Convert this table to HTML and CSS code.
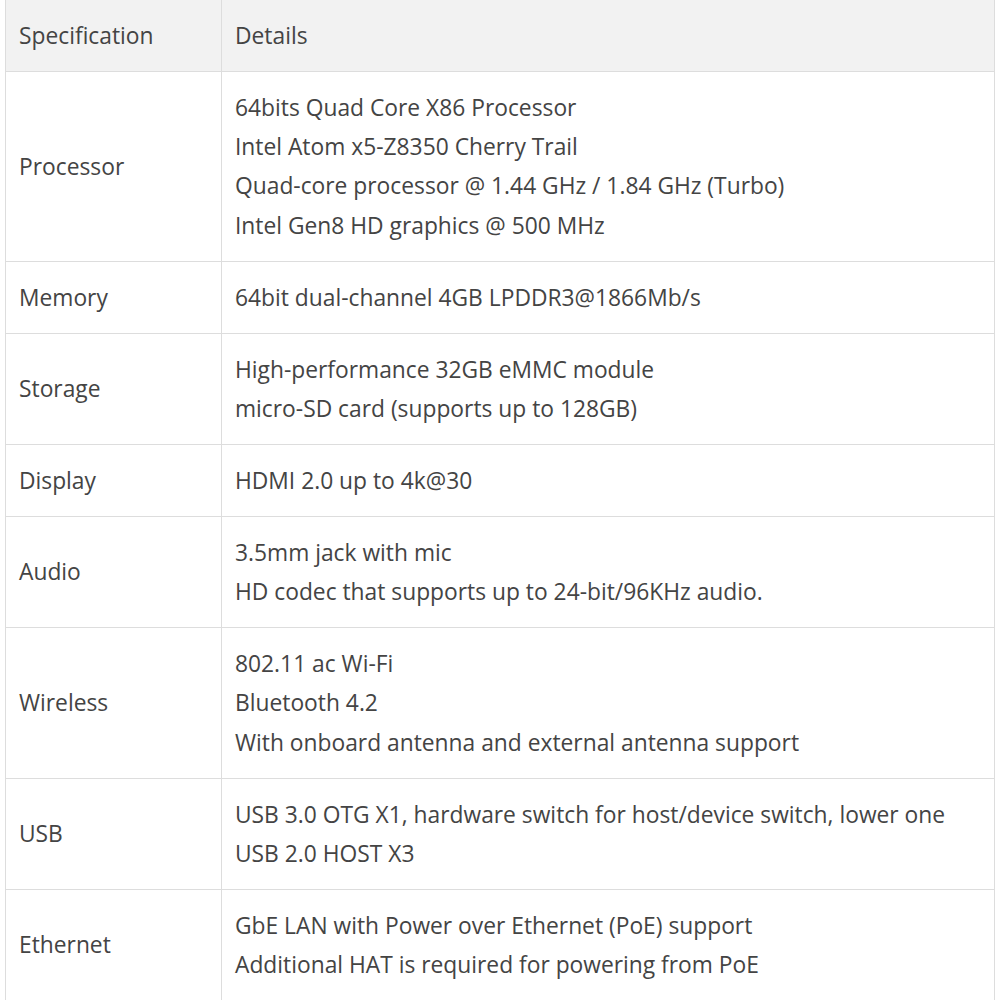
FILE: index.html
```html
<!DOCTYPE html>
<html lang="en">
<head>
  <meta charset="UTF-8" />
  <title>Specifications</title>
  <link rel="stylesheet" href="styles.css">
</head>
<body>
  <div class="wrap">
    <table class="spec">
      <thead>
        <tr><th>Specification</th><th>Details</th></tr>
      </thead>
      <tbody>
        <tr>
          <td>Processor</td>
          <td>64bits Quad Core X86 Processor<br>Intel Atom x5-Z8350 Cherry Trail<br>Quad-core processor @ 1.44 GHz / 1.84 GHz (Turbo)<br>Intel Gen8 HD graphics @ 500 MHz</td>
        </tr>
        <tr>
          <td>Memory</td>
          <td>64bit dual-channel 4GB LPDDR3@1866Mb/s</td>
        </tr>
        <tr>
          <td>Storage</td>
          <td>High-performance 32GB eMMC module<br>micro-SD card (supports up to 128GB)</td>
        </tr>
        <tr>
          <td>Display</td>
          <td>HDMI 2.0 up to 4k@30</td>
        </tr>
        <tr>
          <td>Audio</td>
          <td>3.5mm jack with mic<br>HD codec that supports up to 24-bit/96KHz audio.</td>
        </tr>
        <tr>
          <td>Wireless</td>
          <td>802.11 ac Wi-Fi<br>Bluetooth 4.2<br>With onboard antenna and external antenna support</td>
        </tr>
        <tr>
          <td>USB</td>
          <td>USB 3.0 OTG X1, hardware switch for host/device switch, lower one<br>USB 2.0 HOST X3</td>
        </tr>
        <tr>
          <td>Ethernet</td>
          <td>GbE LAN with Power over Ethernet (PoE) support<br>Additional HAT is required for powering from PoE</td>
        </tr>
      </tbody>
    </table>
  </div>
</body>
</html>
```

FILE: styles.css
```css
body {
  margin: 0;
  background: #fff;
  font-family: "Open Sans", "Liberation Sans", sans-serif;
  color: #444;
}

.wrap {
  padding: 0 5px;
  margin-top: -1px;
}

.spec {
  width: 100%;
  border-collapse: collapse;
  font-size: 22.8px;
  line-height: 39.33px;
}

.spec th,
.spec td {
  border: 1px solid #ddd;
  padding: 15.8px 13px;
  text-align: left;
  vertical-align: middle;
  font-weight: normal;
}

.spec th {
  background: #f2f2f2;
}

.spec td:first-child,
.spec th:first-child {
  width: 189px;
}
```
